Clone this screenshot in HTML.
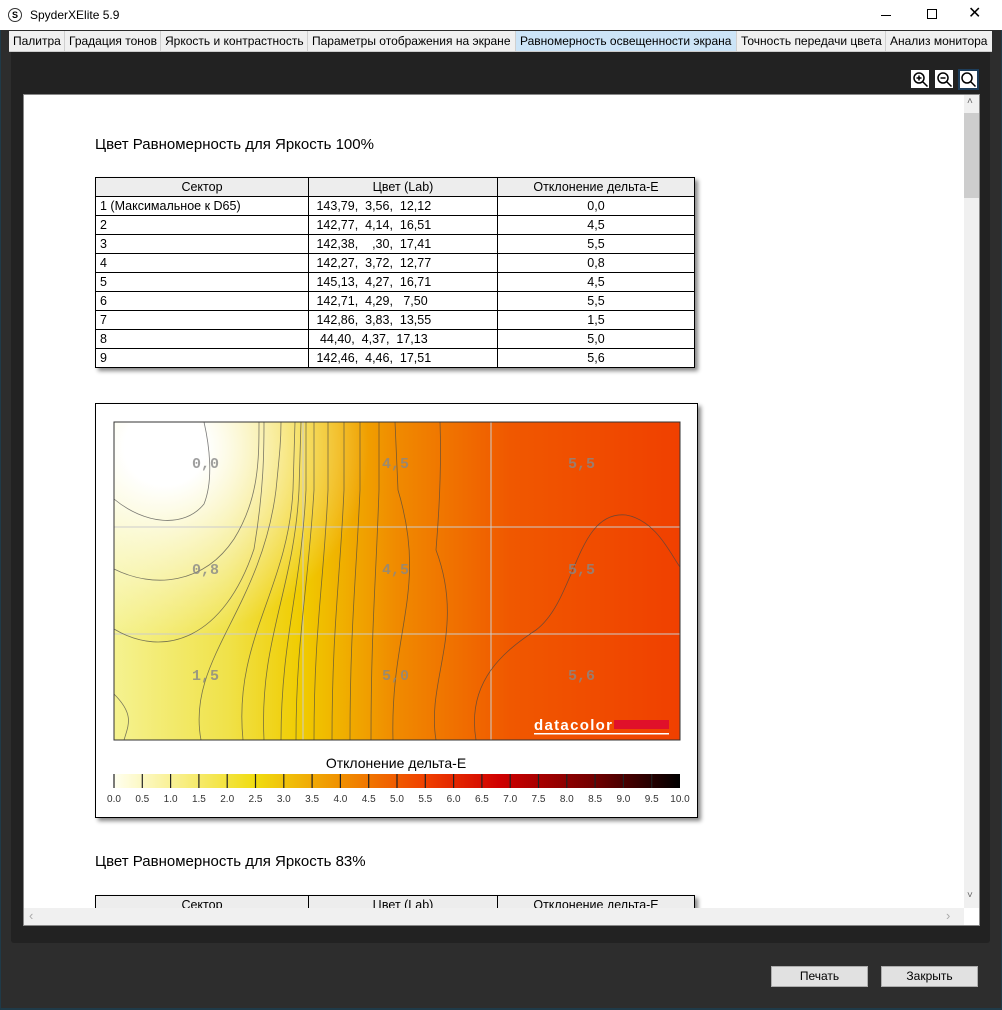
<!DOCTYPE html>
<html><head><meta charset="utf-8"><style>
*{margin:0;padding:0;box-sizing:border-box}
body{width:1002px;height:1010px;background:#2d2d2d;position:relative;overflow:hidden;font-family:"Liberation Sans",Arial,sans-serif;color:#000}
.abs{position:absolute}
#title{left:0;top:0;width:1002px;height:30px;background:#fff;font-size:12px}
#tabs{left:9px;top:31px;width:983px;height:21px;background:#f0f0f0;display:flex;border-bottom:1px solid #ccc}
.tab{font-size:12px;line-height:20px;padding:0 4px;border-right:1px solid #d0d0d0;white-space:nowrap;font-family:"Liberation Sans Narrow","Liberation Sans",sans-serif}
.tab.on{background:#cce4f7}
#inner{left:11px;top:52px;width:979px;height:891px;background:#222;border-radius:0 0 3px 3px}
#view{left:23px;top:94px;width:957px;height:832px;background:#fff;border:1px solid #888;overflow:hidden}
table{border-collapse:collapse;font-size:12.5px;position:absolute;box-shadow:3px 3px 4px #888}
td,th{border:1px solid #000;height:19px;padding:0 4px;font-weight:normal}
th{background:#ededed}
.h{font-size:15px;position:absolute}
.btn{position:absolute;top:966px;width:97px;height:21px;background:#e1e1e1;border:1px solid #adadad;font-size:12px;text-align:center;line-height:19px}
</style></head><body>
<div class="abs" style="left:0;top:0;width:1px;height:1010px;background:#1f3a48"></div>
<div class="abs" style="right:0;top:0;width:1px;height:1010px;background:#1f3a48"></div>
<div class="abs" style="left:0;bottom:0;width:1002px;height:2px;background:#1f3a48"></div>
<div id="title" class="abs">
 <div class="abs" style="left:8px;top:8px;width:14px;height:14px;border:1px solid #333;border-radius:50%;font-size:9px;font-weight:bold;text-align:center;line-height:12px">S</div>
 <div class="abs" style="left:30px;top:8px">SpyderXElite 5.9</div>
 <div class="abs" style="left:881px;top:15px;width:10px;height:1px;background:#000"></div>
 <div class="abs" style="left:927px;top:9px;width:10px;height:10px;border:1px solid #000"></div>
 <div class="abs" style="left:968px;top:3px;font-size:16px;font-weight:300">✕</div>
</div>
<div id="tabs" class="abs">
 <div class="tab" style="width:56px">Палитра</div>
 <div class="tab" style="width:96px">Градация тонов</div>
 <div class="tab" style="width:147px">Яркость и контрастность</div>
 <div class="tab" style="width:208px">Параметры отображения на экране</div>
 <div class="tab on" style="width:221px">Равномерность освещенности экрана</div>
 <div class="tab" style="width:149px">Точность передачи цвета</div>
 <div class="tab" style="width:106px;border:none">Анализ монитора</div>
</div>
<div id="inner" class="abs"></div>
<svg class="abs" style="left:910px;top:69px" width="72" height="22">
 <rect x="1" y="1" width="18" height="18" fill="#fff"/><rect x="25" y="1" width="18" height="18" fill="#fff"/>
 <rect x="48" y="0" width="21" height="21" fill="#1d3d5a"/><rect x="50" y="2" width="17" height="17" fill="#fff"/>
 <g fill="none" stroke="#000" stroke-width="1.5">
 <circle cx="9" cy="9" r="5"/><path d="M12.5 12.5l5 5M6.5 9h5M9 6.5v5"/>
 <circle cx="33" cy="9" r="5"/><path d="M36.5 12.5l5 5M30.5 9h5"/>
 <circle cx="57" cy="9" r="5"/><path d="M60.5 12.5l5 5"/></g>
</svg>
<div id="view" class="abs">
 <div style="position:absolute;left:0;top:0;width:940px;height:813px;overflow:hidden">
  <div class="h" style="left:71px;top:41px">Цвет Равномерность для Яркость 100%</div>
  <table style="left:71px;top:82px;width:600px">
   <tr><th style="width:213px">Сектор</th><th style="width:189px">Цвет (Lab)</th><th>Отклонение дельта-E</th></tr>
   <tr><td>1 (Максимальное к D65)</td><td>&nbsp;143,79, &nbsp;3,56, &nbsp;12,12</td><td align=center>0,0</td></tr>
   <tr><td>2</td><td>&nbsp;142,77, &nbsp;4,14, &nbsp;16,51</td><td align=center>4,5</td></tr>
   <tr><td>3</td><td>&nbsp;142,38, &nbsp;&nbsp;&nbsp;,30, &nbsp;17,41</td><td align=center>5,5</td></tr>
   <tr><td>4</td><td>&nbsp;142,27, &nbsp;3,72, &nbsp;12,77</td><td align=center>0,8</td></tr>
   <tr><td>5</td><td>&nbsp;145,13, &nbsp;4,27, &nbsp;16,71</td><td align=center>4,5</td></tr>
   <tr><td>6</td><td>&nbsp;142,71, &nbsp;4,29, &nbsp;&nbsp;7,50</td><td align=center>5,5</td></tr>
   <tr><td>7</td><td>&nbsp;142,86, &nbsp;3,83, &nbsp;13,55</td><td align=center>1,5</td></tr>
   <tr><td>8</td><td>&nbsp;&nbsp;44,40, &nbsp;4,37, &nbsp;17,13</td><td align=center>5,0</td></tr>
   <tr><td>9</td><td>&nbsp;142,46, &nbsp;4,46, &nbsp;17,51</td><td align=center>5,6</td></tr>
  </table>
  <div style="position:absolute;left:71px;top:308px;width:603px;height:415px;border:1px solid #000;background:#fff;box-shadow:3px 3px 4px #888">
   <svg width="601" height="413" style="position:absolute;left:0;top:0">
    <defs>
     <linearGradient id="g" x1="0" x2="1" y1="0" y2="0">
      <stop offset="0" stop-color="#f5f290"/><stop offset="0.2" stop-color="#f0e24a"/>
      <stop offset="0.33" stop-color="#f0cc00"/><stop offset="0.5" stop-color="#f08a00"/>
      <stop offset="0.7" stop-color="#f05800"/><stop offset="1" stop-color="#f04000"/>
     </linearGradient>
     <radialGradient id="w" cx="0.15" cy="0.08" r="0.6" gradientTransform="scale(0.6 1)">
      <stop offset="0.2" stop-color="#fff"/><stop offset="1" stop-color="#fff" stop-opacity="0"/>
     </radialGradient>
     <linearGradient id="cb" x1="0" x2="1">
      <stop offset="0" stop-color="#fffff0"/><stop offset="0.25" stop-color="#f0dc10"/>
      <stop offset="0.4" stop-color="#f09000"/><stop offset="0.55" stop-color="#f04000"/>
      <stop offset="0.68" stop-color="#d00000"/><stop offset="0.85" stop-color="#700000"/>
      <stop offset="1" stop-color="#000"/>
     </linearGradient>
    </defs>
    <rect x="18" y="18" width="566" height="318" fill="url(#g)"/>
    <rect x="18" y="18" width="566" height="318" fill="url(#w)"/>
    <g stroke="#ccc" stroke-width="1"><path d="M207 18v318M395 18v318M18 123h566M18 230h566"/></g>
    <g fill="none" stroke="#444" stroke-width="0.8" opacity="0.7">
     <path d="M18 95c30 25 70 30 90 5 10-25 5-60 0-82"/>
     <path d="M18 165c40 20 90 15 120-30 25-40 25-80 25-117"/>
     <path d="M18 225c50 30 110 10 140-80 10-60 10-100 10-127"/>
     <path d="M18 290c20 20 15 30 10 46"/>
     <path d="M105 336c-15-80 60-130 75-250 4-40 5-50 5-68"/>
     <path d="M147 336c-10-100 45-150 50-250l2-68"/>
     <path d="M168 336c-5-100 30-150 35-250l2-68"/>
     <path d="M185 336c0-100 20-150 25-250l0-68"/>
     <path d="M200 336c0-100 12-150 18-250l0-68"/>
     <path d="M218 336c0-110 10-160 14-250l0-68"/>
     <path d="M236 336c0-110 8-160 12-250l0-68"/>
     <path d="M254 336c0-110 6-160 10-250l0-68"/>
     <path d="M275 336c0-110 5-160 8-250l0-68"/>
     <path d="M297 336c-3-110 35-150 5-250l-3-68"/>
     <path d="M340 336c-10-60 30-110 0-190 5-60 5-100 4-128"/>
     <path d="M380 336c-10-60 30-90 60-110 40-30 40-120 90-115 30 5 45 40 54 52"/>
    </g>
    <g font-family="Liberation Mono,monospace" font-size="15" font-weight="bold" fill="#888" opacity="0.8">
     <text x="96" y="64">0,0</text><text x="286" y="64">4,5</text><text x="472" y="64">5,5</text>
     <text x="96" y="170">0,8</text><text x="286" y="170">4,5</text><text x="472" y="170">5,5</text>
     <text x="96" y="276">1,5</text><text x="286" y="276">5,0</text><text x="472" y="276">5,6</text>
    </g>
    <text x="438" y="326" font-size="15" font-weight="bold" fill="#fff" font-family="Liberation Sans,sans-serif" textLength="78">datacolor</text>
    <rect x="518" y="316" width="55" height="9" fill="#e0102a"/>
    <rect x="438" y="329" width="135" height="1.5" fill="#fff"/>
    <rect x="18" y="18" width="566" height="318" fill="none" stroke="#333"/>
    <text x="300" y="364" text-anchor="middle" font-size="14" font-family="Liberation Sans,sans-serif">Отклонение дельта-E</text>
    <rect x="18" y="370" width="566" height="14" fill="url(#cb)"/>
    <g stroke="#222" stroke-width="1.2" id="ticks"></g>
    <g font-size="10" fill="#333" text-anchor="middle" font-family="Liberation Sans,sans-serif" id="labs"></g>
   </svg>
  </div>
  <div class="h" style="left:71px;top:758px">Цвет Равномерность для Яркость 83%</div>
  <table style="left:71px;top:800px;width:600px">
   <tr><th style="width:213px">Сектор</th><th style="width:189px">Цвет (Lab)</th><th>Отклонение дельта-E</th></tr>
  </table>
 </div>
 <div class="abs" style="left:940px;top:0;width:15px;height:813px;background:#f0f0f0">
  <div class="abs" style="left:0;top:18px;width:15px;height:85px;background:#cdcdcd"></div>
  <div class="abs" style="left:3px;top:1px;font-size:10px;color:#666">˄</div>
  <div class="abs" style="left:3px;top:795px;font-size:10px;color:#666">˅</div>
 </div>
 <div class="abs" style="left:0;top:813px;width:940px;height:17px;background:#f0f0f0">
  <div class="abs" style="left:5px;top:0;font-size:13px;color:#aaa">‹</div>
  <div class="abs" style="left:922px;top:0;font-size:13px;color:#aaa">›</div>
 </div>
</div>
<div class="btn" style="left:771px">Печать</div>
<div class="btn" style="left:881px">Закрыть</div>
<script>
var t=document.getElementById('ticks'),l=document.getElementById('labs'),s='';var ls='';
for(var i=0;i<=20;i++){var x=18+i*566/20;if(i<20)s+='<line x1="'+x+'" x2="'+x+'" y1="370" y2="384"/>';ls+='<text x="'+x+'" y="398">'+(i/2).toFixed(1)+'</text>';}
t.innerHTML=s;l.innerHTML=ls;
</script>
</body></html>
